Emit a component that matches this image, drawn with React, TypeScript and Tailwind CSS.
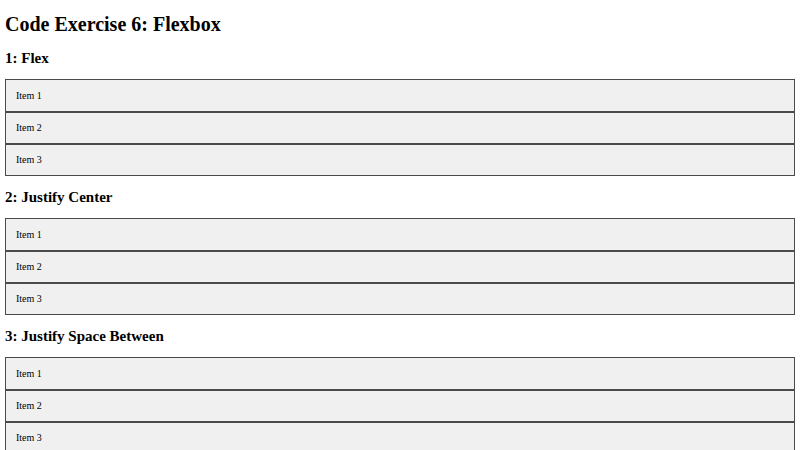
import React from "react";

const sections = ["1: Flex", "2: Justify Center", "3: Justify Space Between"];

function Items() {
  return (
    <div className="flex flex-col">
      {["Item 1", "Item 2", "Item 3"].map((t) => (
        <div
          key={t}
          className="border border-[#4a4a4a] bg-[#f0f0f0] px-[10px] py-[9.4px] text-[10px] leading-[11.5px] text-black"
        >
          {t}
        </div>
      ))}
    </div>
  );
}

export default function App() {
  return (
    <div
      className="min-h-[450px] bg-white px-[5px] pt-[13.4px] text-black"
      style={{ fontFamily: '"Liberation Serif", "Times New Roman", serif' }}
    >
      <h1 className="text-[20px] font-bold leading-[23px]">Code Exercise 6: Flexbox</h1>
      <div className="mt-[13.4px] flex flex-col gap-[12.45px]">
        {sections.map((s) => (
          <div key={s} className="flex flex-col gap-[12.45px]">
            <h2 className="text-[15px] font-bold leading-[17.25px]">{s}</h2>
            <Items />
          </div>
        ))}
      </div>
    </div>
  );
}
